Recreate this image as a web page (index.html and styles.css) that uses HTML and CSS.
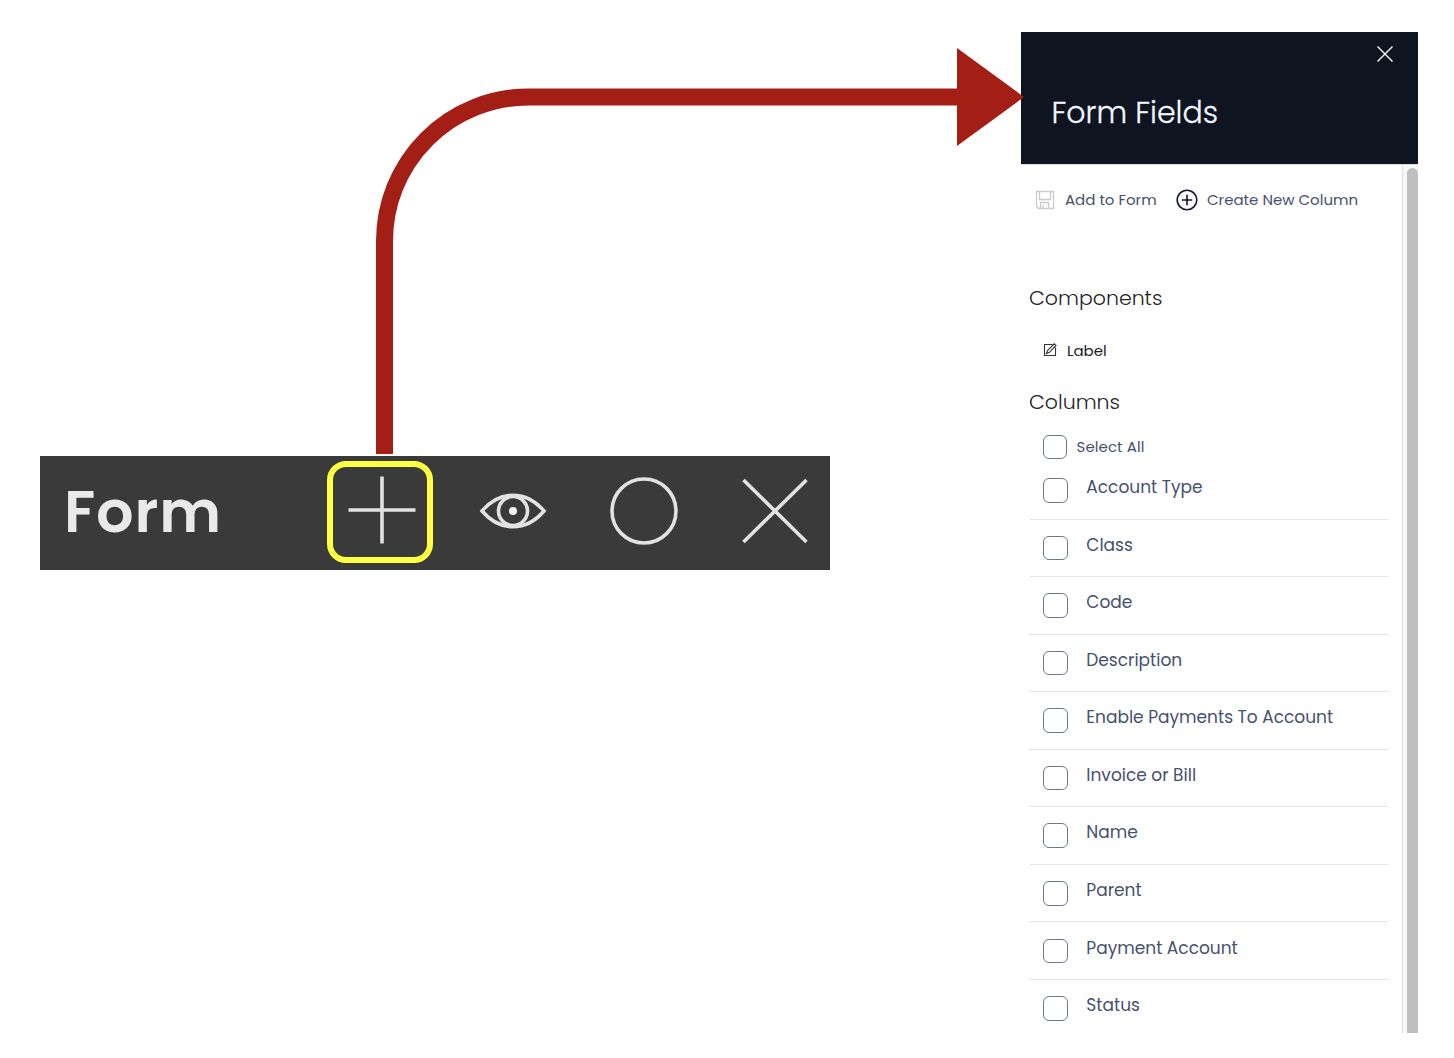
FILE: index.html
```html
<!DOCTYPE html>
<html lang="en">
<head>
<meta charset="utf-8">
<title>Form Fields</title>
<link rel="stylesheet" href="styles.css">
</head>
<body>
<main class="page">
  <section class="toolbar">
    <h1 class="toolbar-title">Form</h1>
    <button class="tool tool-active" aria-label="Add"><svg width="68" height="68" viewBox="0 0 68 68"><path d="M34 .5v67M.5 34h67"/></svg></button>
    <button class="tool tool-eye" aria-label="Preview"><svg width="68" height="68" viewBox="0 0 68 68"><path d="M3 34C21 13 47 13 65 34C47 55 21 55 3 34Z"/><circle cx="34" cy="34" r="14.500"/><circle class="dot" cx="34" cy="34" r="4"/></svg></button>
    <button class="tool tool-circle" aria-label="Record"><svg width="68" height="68" viewBox="0 0 68 68"><circle cx="34" cy="34" r="32"/></svg></button>
    <button class="tool tool-close" aria-label="Close"><svg width="68" height="68" viewBox="0 0 68 68"><path d="M2.500 3l63 62M65.500 3l-63 62"/></svg></button>
  </section>

  <aside class="panel">
    <header class="panel-head">
      <svg class="panel-close" width="18" height="18" viewBox="0 0 18 18"><path d="M1.500 1.500l15 15M16.500 1.500l-15 15"/></svg>
      <h2 class="panel-title">Form Fields</h2>
    </header>
    <div class="panel-body">
      <div class="content">
        <div class="actions">
          <svg class="icon-save" width="20" height="20" viewBox="0 0 20 20"><path d="M1.500 1.500h17v17h-15l-2-2zM4.500 1.500v8h11v-8M5.500 18.500v-6h8v6M8 15v3.500"/></svg>
          <span class="act-add">Add to Form</span>
          <svg class="icon-new" width="22" height="22" viewBox="0 0 22 22"><circle cx="11" cy="11" r="9.800"/><path d="M11 5.800v10.400M5.800 11h10.400"/></svg>
          <span class="act-new">Create New Column</span>
        </div>
        <h3 class="section">Components</h3>
        <div class="component">
          <svg class="icon-edit" width="14" height="14" viewBox="0 0 14 14"><path d="M9.500 1.500H1.500v11h11V4.500M3.500 10.500l1-3L11.300 .8l1.700 1.700L6.500 9.300z"/></svg>
          <span>Label</span>
        </div>
        <h3 class="section section-columns">Columns</h3>
        <label class="select-all"><i class="box"></i><span>Select All</span></label>
        <ul class="fields">
          <li><i class="box"></i><span>Account Type</span></li>
          <li><i class="box"></i><span>Class</span></li>
          <li><i class="box"></i><span>Code</span></li>
          <li><i class="box"></i><span>Description</span></li>
          <li><i class="box"></i><span>Enable Payments To Account</span></li>
          <li><i class="box"></i><span>Invoice or Bill</span></li>
          <li><i class="box"></i><span>Name</span></li>
          <li><i class="box"></i><span>Parent</span></li>
          <li><i class="box"></i><span>Payment Account</span></li>
          <li><i class="box"></i><span>Status</span></li>
        </ul>
      </div>
      <div class="scrollbar"><div class="thumb"></div></div>
    </div>
  </aside>
  <svg class="arrow" width="1454" height="1058" viewBox="0 0 1454 1058"><path class="arrow-line" d="M384.500 454V241A144 144 0 0 1 528.500 97H960"/><path class="arrow-head" d="M957 48L1024 97L957 146Z"/></svg>
</main>
</body>
</html>
```
FILE: styles.css
```css
* { box-sizing: border-box; }
body { margin: 0; background: #fff; font-family: Poppins, Inter, sans-serif; color: #465070; }
h1, h2, h3, ul { margin: 0; padding: 0; font-weight: 400; }
svg { display: block; fill: none; flex: none; }
.page { position: relative; width: 1454px; height: 1058px; overflow: hidden; display: flex; justify-content: space-between; align-items: flex-start; padding: 32px 36px 0 40px; }

.toolbar { width: 790px; height: 114px; margin-top: 424px; background: #3a3a3a; display: flex; align-items: center; padding-left: 24px; padding-bottom: 2px; }
.toolbar-title { width: 263px; margin-top: -1px; font-size: 59px; line-height: 70px; font-weight: 600; letter-spacing: .8px; color: #e9e9e9; white-space: nowrap; }
.tool { width: 106px; height: 102px; padding: 0 0 1px; border: 0; background: none; display: flex; align-items: center; justify-content: center; margin-top: -2px; }
.tool svg { stroke: #e2e2e2; stroke-width: 3.6; }
.tool .dot { fill: #f4f4f4; stroke: none; }
.tool-active { border: 6px solid #ffff42; border-radius: 19px; margin-top: 0; padding-bottom: 4px; }
.tool-active svg { margin-left: 4px; }
.tool-eye { margin-left: 27px; }
.tool-circle { margin-left: 25px; }
.tool-close { margin-left: 25px; }

.panel { width: 397px; height: 1001px; display: flex; flex-direction: column; }
.panel-head { height: 132px; background: #0f1421; padding: 13px 24.500px 0 30.500px; }
.panel-close { margin-left: auto; stroke: #fff; stroke-width: 1.4; }
.panel-title { margin-top: 32px; font-size: 30px; line-height: 36px; font-weight: 300; color: #f3f6ff; -webkit-text-stroke: .3px #f3f6ff; white-space: nowrap; }
.panel-body { flex: 1; min-height: 0; display: flex; border-top: 1px solid #dcdde0; }
.content { width: 381px; padding: 0 14px 0 8px; overflow: hidden; white-space: nowrap; }
.scrollbar { width: 16px; background: #f8f8f8; border-left: 1px solid #dedede; padding: 3px 0 0 4px; }
.thumb { height: 100%; background: #bfbfbf; border-radius: 6px 6px 0 0; }

.actions { display: flex; align-items: center; height: 22px; margin-top: 24px; padding-left: 6px; font-size: 15px; }
.actions span { margin-top: -1.500px; }
.icon-save { stroke: #cbcbcb; stroke-width: 1.3; margin-right: 10px; }
.act-add { width: 111px; }
.icon-new { stroke: #10182a; stroke-width: 1.6; margin-right: 9px; }
.section { margin-top: 75px; font-size: 20.500px; line-height: 24px; font-weight: 300; color: #222; }
.component { display: flex; align-items: center; margin: 30px 0 0 14px; height: 20px; font-size: 15px; color: #1c1c1c; }
.icon-edit { stroke: #333; stroke-width: 1.1; margin-right: 10px; }
.section-columns { margin-top: 30px; }
.select-all { display: flex; align-items: center; height: 24px; margin: 21px 0 0 14px; font-size: 15px; letter-spacing: .08px; }
.select-all span { margin-top: -1px; }
.box { flex: none; width: 25px; height: 24.500px; border: 1px solid #6f778e; border-radius: 6px; }
.select-all .box { width: 24px; height: 24px; margin-right: 9.500px; }
.fields { list-style: none; margin-top: 3px; }
.fields li { display: flex; align-items: flex-start; height: 57.540px; padding: 16.300px 0 0 14px; border-bottom: 1px solid #e5e5e5; font-size: 17px; line-height: 20px; }
.fields li:last-child { border-bottom: 0; }
.fields .box { margin-right: 18.300px; }
.fields span { margin-top: -1px; }

.arrow { position: absolute; inset: 0; pointer-events: none; }
.arrow-line { stroke: #a31f16; stroke-width: 17; }
.arrow-head { fill: #a31f16; }
```
